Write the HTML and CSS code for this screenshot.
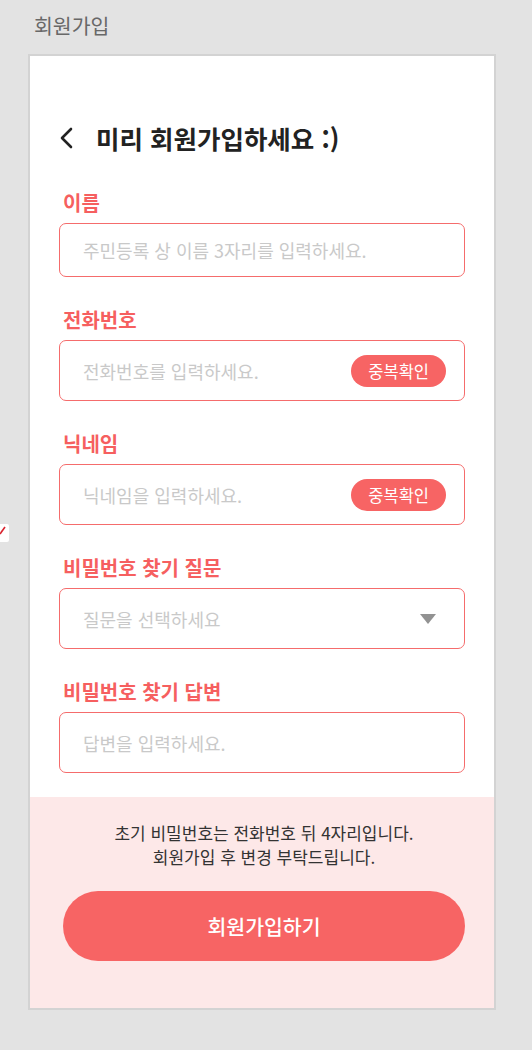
FILE: index.html
```html
<!DOCTYPE html>
<html lang="ko">
<head>
    <meta charset="UTF-8">
    <meta name="viewport" content="width=device-width, initial-scale=1.0">
    <title>회원가입</title>
    <link rel="stylesheet" href="styles.css">
</head>
<body>

    <div class="page-title">회원가입</div>

    <!-- 왼쪽에 걸친 체크 표시 -->
    <div class="side-mark">
        <svg width="9" height="18" viewBox="0 0 9 18"><path d="M0 10 L5 3" stroke="#d9232e" stroke-width="1.6" fill="none"/></svg>
    </div>

    <div class="card">
        <div class="form-area">
            <div class="header">
                <svg class="back" width="16" height="22" viewBox="0 0 16 22"><polyline points="13,2 4,11 13,20" fill="none" stroke="#222" stroke-width="2.6" stroke-linecap="round" stroke-linejoin="round"/></svg>
                <h1>미리 회원가입하세요 :)</h1>
            </div>

            <div class="field">
                <label for="name">이름</label>
                <div class="box short">
                    <input type="text" id="name" placeholder="주민등록 상 이름 3자리를 입력하세요.">
                </div>
            </div>

            <div class="field">
                <label for="phone">전화번호</label>
                <div class="box">
                    <input type="text" id="phone" placeholder="전화번호를 입력하세요.">
                    <button type="button" class="check">중복확인</button>
                </div>
            </div>

            <div class="field">
                <label for="nick">닉네임</label>
                <div class="box">
                    <input type="text" id="nick" placeholder="닉네임을 입력하세요.">
                    <button type="button" class="check">중복확인</button>
                </div>
            </div>

            <div class="field">
                <label>비밀번호 찾기 질문</label>
                <div class="box select">
                    <span class="placeholder">질문을 선택하세요</span>
                    <span class="arrow"></span>
                </div>
            </div>

            <div class="field last">
                <label for="answer">비밀번호 찾기 답변</label>
                <div class="box">
                    <input type="text" id="answer" placeholder="답변을 입력하세요.">
                </div>
            </div>
        </div>

        <div class="bottom">
            <p>초기 비밀번호는 전화번호 뒤 4자리입니다.<br>회원가입 후 변경 부탁드립니다.</p>
            <button type="submit" class="submit">회원가입하기</button>
        </div>
    </div>

</body>
</html>
```

FILE: styles.css
```css
body {
    font-family: 'Noto Sans CJK KR', 'Noto Sans', sans-serif;
    background-color: #e3e3e3;
    color: #333;
    margin: 0;
    padding: 11px 0 0;
}
.page-title {
    padding-left: 34px;
    font-size: 20.5px;
    line-height: 28px;
    color: #686868;
    margin-bottom: 15px;
}
.side-mark {
    position: absolute;
    left: 0;
    top: 524px;
    width: 9px;
    height: 18px;
    background: #fff;
    border-radius: 0 2px 2px 0;
}
.side-mark svg {
    display: block;
}
.card {
    width: 464px;
    margin-left: 28px;
    background: #fff;
    border: 2px solid #d3d3d3;
}
.form-area {
    padding: 66px 29px 24px;
}
.header {
    display: flex;
    align-items: center;
    height: 32px;
    margin-bottom: 37px;
}
.back {
    margin-left: -1px;
    margin-right: 22px;
}
h1 {
    margin: 0;
    font-size: 25.5px;
    font-weight: 700;
    color: #222;
    line-height: 32px;
}
.field {
    margin-bottom: 31px;
}
.field.last {
    margin-bottom: 0;
}
label {
    display: block;
    padding-left: 4px;
    font-size: 20px;
    font-weight: 700;
    line-height: 24px;
    color: #f65f5f;
    margin-bottom: 8px;
}
.box {
    display: flex;
    align-items: center;
    height: 61px;
    border: 1.5px solid #f56c6c;
    border-radius: 7px;
    box-sizing: border-box;
    padding: 0 18px 0 23px;
}
.box.short {
    height: 54px;
}
input {
    flex: 1;
    min-width: 0;
    border: none;
    outline: none;
    padding: 0;
    font-family: inherit;
    font-size: 18px;
    color: #333;
    background: transparent;
}
input::placeholder,
.placeholder {
    color: #c9c9c9;
}
.placeholder {
    flex: 1;
    font-size: 18px;
}
.check {
    height: 32px;
    padding: 0 17px;
    border: none;
    border-radius: 16px;
    background-color: #f76464;
    color: #fff;
    font-family: inherit;
    font-size: 16.5px;
    line-height: 32px;
}
.arrow {
    width: 0;
    height: 0;
    border-left: 8px solid transparent;
    border-right: 8px solid transparent;
    border-top: 10px solid #929292;
    margin-right: 10px;
}
.bottom {
    background-color: #fde8e8;
    padding: 24px 29px 47px 33px;
    text-align: center;
}
.bottom p {
    margin: 0 0 22px;
    font-size: 17px;
    line-height: 24px;
    color: #333;
}
.submit {
    display: block;
    width: 100%;
    height: 70px;
    border: none;
    border-radius: 35px;
    background-color: #f76464;
    color: #fff;
    font-family: inherit;
    font-size: 20.5px;
    font-weight: 500;
}
```
